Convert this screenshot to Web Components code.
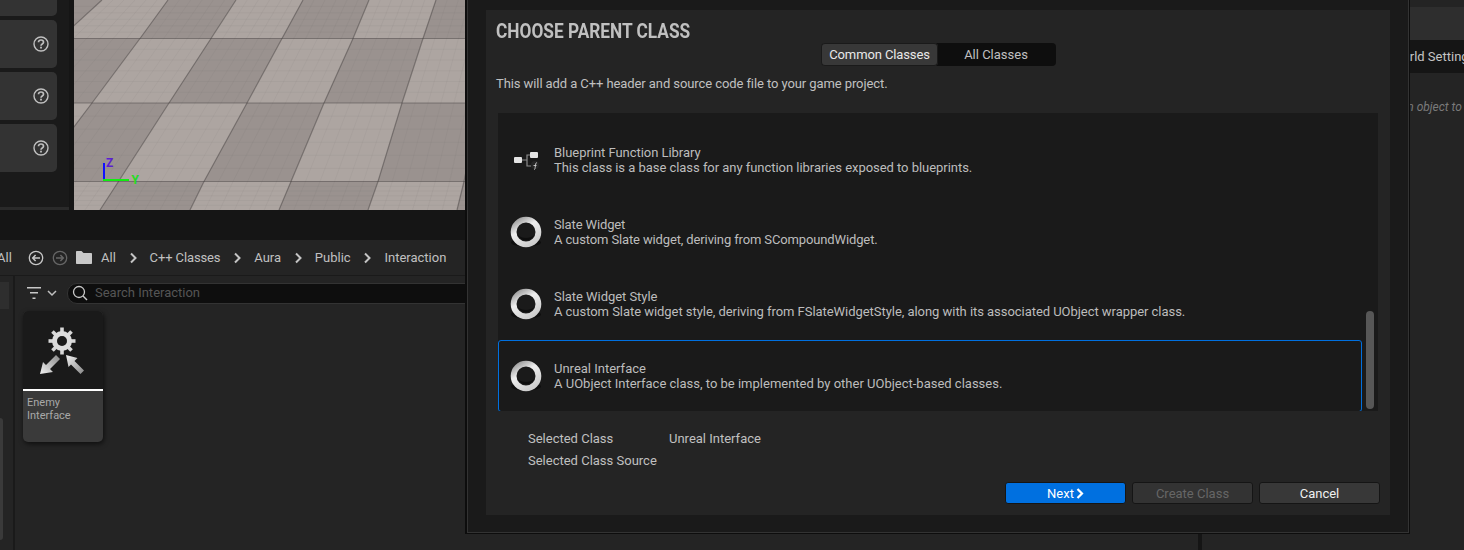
<!DOCTYPE html>
<html>
<head>
<meta charset="utf-8">
<title>Choose Parent Class</title>
<style>
  html,body{margin:0;padding:0;width:1464px;height:550px;overflow:hidden;background:#151515;}
  body{font-family:Roboto,"Liberation Sans",sans-serif;font-size:13px;color:#c0c0c0;}
</style>
</head>
<body>
<ue-editor>
  <ue-side-panel slot="side"></ue-side-panel>
  <ue-viewport slot="viewport"></ue-viewport>
  <ue-browser slot="browser"></ue-browser>
  <ue-details slot="details"></ue-details>
  <ue-dialog slot="dialog">
    <ue-class-row style="letter-spacing:-.04px" icon="function" name="Blueprint Function Library" desc="This class is a base class for any function libraries exposed to blueprints."></ue-class-row>
    <ue-class-row style="letter-spacing:-.13px" icon="ring" name="Slate Widget" desc="A custom Slate widget, deriving from SCompoundWidget."></ue-class-row>
    <ue-class-row style="letter-spacing:-.045px" icon="ring" name="Slate Widget Style" desc="A custom Slate widget style, deriving from FSlateWidgetStyle, along with its associated UObject wrapper class."></ue-class-row>
    <ue-class-row icon="ring" selected name="Unreal Interface" desc="A UObject Interface class, to be implemented by other UObject-based classes."></ue-class-row>
  </ue-dialog>
</ue-editor>

<script>
(function(customElements){
  'use strict';

  const ICON_HELP=`<svg width="16" height="16" viewBox="0 0 16 16" fill="none">
    <circle cx="8" cy="8" r="7" stroke="#c0c0c0" stroke-width="1.400"/>
    <path d="M5.500 6.300C5.500 4.900 6.600 4 8 4s2.500.9 2.500 2.200c0 1.800-2.500 1.700-2.500 3.500" stroke="#c0c0c0" stroke-width="1.700"/>
    <rect x="7.100" y="10.700" width="1.800" height="1.800" fill="#c0c0c0"/></svg>`;

  class UeEditor extends HTMLElement{
    constructor(){
      super();
      this.attachShadow({mode:'open'}).innerHTML=`<style>
        :host{display:grid;grid-template-columns:1198px 262px;column-gap:4px;width:1464px;height:550px;position:relative;background:#151515;overflow:hidden;}
        .left{display:grid;grid-template-rows:210px 310px;row-gap:30px;min-width:0;}
        .top{display:grid;grid-template-columns:69px 1fr;column-gap:5px;min-height:0;}
      </style>
      <div class="left">
        <div class="top"><slot name="side"></slot><slot name="viewport"></slot></div>
        <slot name="browser"></slot>
      </div>
      <slot name="details"></slot>
      <slot name="dialog"></slot>`;
    }
  }

  class UeSidePanel extends HTMLElement{
    constructor(){
      super();
      this.attachShadow({mode:'open'}).innerHTML=`<style>
        :host{display:flex;flex-direction:column;background:#1a1a1a;height:210px;overflow:hidden;box-sizing:border-box;border-bottom:3px solid #2a2a2a;}
        .btn{width:57px;height:48px;flex:none;background:#333;border-radius:0 5px 5px 0;margin-bottom:4px;display:flex;align-items:center;justify-content:flex-end;padding-right:8px;box-sizing:border-box;}
        .cut{margin-top:-32px;}
      </style>
      <div class="btn cut"></div>
      <div class="btn">${ICON_HELP}</div>
      <div class="btn">${ICON_HELP}</div>
      <div class="btn">${ICON_HELP}</div>`;
    }
  }

  class UeViewport extends HTMLElement{
    constructor(){
      super();
      this.attachShadow({mode:'open'}).innerHTML=`<style>
        :host{display:block;position:relative;height:210px;overflow:hidden;background:#a8a09c;}
        svg{display:block;}
        .gizmo{position:absolute;left:26px;top:155px;}
      </style>
      ${this.floor()}
      <svg class="gizmo" width="70" height="36" viewBox="0 0 70 36">
        <rect x="3" y="8" width="2" height="18" fill="#1010ff"/>
        <rect x="3" y="24" width="26" height="2" fill="#10ee10"/>
        <text x="6" y="12" font-family="Roboto" font-size="12" font-weight="700" fill="#5a20d0">Z</text>
        <text x="31.500" y="29" font-family="Roboto" font-size="12" font-weight="700" fill="#22dd22">Y</text>
      </svg>`;
    }

    floor(){
      // grid lines as measured on screen, x at each horizontal line, relative to the page
      const rowsY=[0,38.5,103,181.5,210];
      const cols=[
        [102,60,-10,-110,-150],
        [168,140,92,33,10],
        [236,211,169,118.5,100],
        [303,282,247,204,190],
        [369,353,324,291,279],
        [436,423,402,378,368],
        [503,494,480,464,457]
      ];
      const LIGHT='#ada5a1',DARK='#9a928f';
      let out='';
      const ox=74;
      for(let r=0;r<4;r++){
        for(let c=-1;c<7;c++){
          const x=(col,row)=>{
            if(col<0) return -400;
            if(col>6) return 800;
            return cols[col][row]-ox;
          };
          out+=`<polygon points="${x(c,r)},${rowsY[r]} ${x(c+1,r)},${rowsY[r]} ${x(c+1,r+1)},${rowsY[r+1]} ${x(c,r+1)},${rowsY[r+1]}" fill="${this.cell(r,c)?LIGHT:DARK}"/>`;
        }
      }
      // fine grid
      let fine='';
      for(let c=0;c<6;c++){
        for(let k=1;k<6;k++){
          const t=k/6;
          const pts=rowsY.map((y,r)=>`${(cols[c][r]*(1-t)+cols[c+1][r]*t-ox).toFixed(1)},${y}`).join(' ');
          fine+=`<polyline points="${pts}" fill="none"/>`;
        }
      }
      for(let r=0;r<4;r++){
        for(let k=1;k<6;k++){
          const y=rowsY[r]+(rowsY[r+1]-rowsY[r])*k/6;
          fine+=`<line x1="0" x2="400" y1="${y.toFixed(1)}" y2="${y.toFixed(1)}"/>`;
        }
      }
      let lines='';
      cols.forEach(col=>{
        lines+=`<polyline points="${col.map((v,r)=>`${v-ox},${rowsY[r]}`).join(' ')}" fill="none"/>`;
      });
      [38.5,103,181.5].forEach(y=>{ lines+=`<line x1="0" x2="400" y1="${y}" y2="${y}"/>`; });
      return `<svg width="391" height="210" viewBox="0 0 391 210">${out}
        <g stroke="#5a5050" stroke-opacity=".06" stroke-width="1">${fine}</g>
        <g stroke="#3f3a3a" stroke-opacity=".45" stroke-width="1.200" style="filter:blur(.5px)">${lines}</g></svg>`;
    }

    cell(r,c){
      // column c is the cell right of line c, -1 is left of line 0
      if(r===0) return c%2===0;
      if(r===1) return c%2!==0;
      if(r===2) return c===-1 || c%2===0;
      return c%2!==0;
    }
  }

  class UeCrumb extends HTMLElement{
    constructor(){
      super();
      this.attachShadow({mode:'open'}).innerHTML=`<style>
        :host{display:inline-flex;align-items:center;color:#c0c0c0;font-size:13px;white-space:nowrap;}
        svg{margin-left:12.800px;margin-right:12px;}
      </style>
      <slot></slot>
      <svg width="9" height="12" viewBox="0 0 9 12" fill="none"><path d="M2 1.500 6.500 6 2 10.500" stroke="#c4c4c4" stroke-width="2"/></svg>`;
    }
  }

  class UeBrowser extends HTMLElement{
    constructor(){
      super();
      this.attachShadow({mode:'open'}).innerHTML=`<style>
        :host{display:grid;grid-template-rows:36px 1fr;background:#242424;height:310px;overflow:hidden;}
        .crumbs{display:flex;align-items:center;padding-left:0;color:#c0c0c0;overflow:hidden;white-space:nowrap;border-bottom:1px solid #1a1a1a;height:36px;box-sizing:border-box;}
        .clip{margin-left:-3px;width:31px;flex:none;}
        .nav{display:flex;align-items:center;gap:8px;flex:none;margin-right:8px;}
        .tight{letter-spacing:-.12px;}
        .body{display:grid;grid-template-columns:13px 2px 1fr;min-height:0;}
        .tree{position:relative;background:#242424;}
        .tree i{display:block;width:9px;height:27px;margin-top:6px;background:#2e2e2e;}
        .tree b{position:absolute;left:0;top:142px;width:3px;height:122px;background:#3a3a3a;border-radius:0 3px 3px 0;}
        .rule{background:#1a1a1a;}
        .main{padding:0 0 0 8px;display:flex;flex-direction:column;min-width:0;}
        .filter{display:flex;align-items:center;height:35px;flex:none;padding-left:4px;}
        .filter svg.f{margin-right:6px;}
        .filter svg.c{margin-right:10px;}
        ue-search{flex:1;}
      </style>
      <div class="crumbs">
        <span class="clip">All</span>
        <div class="nav">
          <svg width="16" height="16" viewBox="0 0 16 16" fill="none"><circle cx="8" cy="8" r="6.700" stroke="#c8c8c8" stroke-width="1.300"/><path d="M12 8H5M7.600 5 4.700 8l2.900 3" stroke="#c8c8c8" stroke-width="1.500"/></svg>
          <svg width="16" height="16" viewBox="0 0 16 16" fill="none"><circle cx="8" cy="8" r="6.700" stroke="#666" stroke-width="1.300"/><path d="M4 8h7M8.400 5l2.900 3-2.900 3" stroke="#666" stroke-width="1.500"/></svg>
        </div>
        <svg style="flex:none;margin-right:9px" width="16" height="13" viewBox="0 0 16 13"><path d="M0 1C0 .4.400 0 1 0h4.500l2 2H15c.6 0 1 .4 1 1v9c0 .6-.4 1-1 1H1c-.6 0-1-.4-1-1z" fill="#c8c8c8"/></svg>
        <ue-crumb>All</ue-crumb>
        <ue-crumb class="tight">C++ Classes</ue-crumb>
        <ue-crumb>Aura</ue-crumb>
        <ue-crumb>Public</ue-crumb>
        <span>Interaction</span>
      </div>
      <div class="body">
        <div class="tree"><i></i><b></b></div>
        <div class="rule"></div>
        <div class="main">
          <div class="filter">
            <svg class="f" width="14" height="13" viewBox="0 0 14 13"><path d="M0 0h14v1.500H0zM3 5h8v1.500H3zM5.500 10.500h3V12h-3z" fill="#c8c8c8"/></svg>
            <svg class="c" width="10" height="7" viewBox="0 0 10 7" fill="none"><path d="M1 1l4 4 4-4" stroke="#c0c0c0" stroke-width="1.500"/></svg>
            <ue-search>Search Interaction</ue-search>
          </div>
          <ue-asset-tile>Enemy Interface</ue-asset-tile>
        </div>
      </div>`;
    }
  }

  class UeSearch extends HTMLElement{
    constructor(){
      super();
      this.attachShadow({mode:'open'}).innerHTML=`<style>
        :host{display:flex;align-items:center;height:21px;box-sizing:border-box;background:#0e0e0e;border:1px solid #333;border-radius:10px;color:#555;font-size:13px;padding:0 0 2px 4px;}
        svg{margin-right:7px;flex:none;}
      </style>
      <svg width="16" height="16" viewBox="0 0 16 16" fill="none"><circle cx="7" cy="7" r="5.500" stroke="#c8c8c8" stroke-width="1.300"/><path d="M11 11l4 4" stroke="#c8c8c8" stroke-width="1.500"/></svg>
      <slot></slot>`;
    }
  }

  class UeAssetTile extends HTMLElement{
    constructor(){
      super();
      this.attachShadow({mode:'open'}).innerHTML=`<style>
        :host{display:block;width:80px;height:131px;border-radius:5px;overflow:hidden;background:#3a3a3a;box-shadow:1px 2px 5px rgba(0,0,0,.6);}
        .thumb{height:78px;background:#1a1a1a;display:flex;justify-content:center;border-bottom:2px solid #fff;}
        .label{padding:5px 4px;font-size:11px;line-height:13px;color:#a8a8a8;width:56px;}
        svg{display:block;}
      </style>
      <div class="thumb">
        <svg width="80" height="78" viewBox="0 0 80 78">
          <defs>
            <linearGradient id="a1" x1="1" y1="0" x2="0" y2="1"><stop offset="0" stop-color="#888"/><stop offset="1" stop-color="#f2f2f2"/></linearGradient>
            <linearGradient id="a2" x1="0" y1="0" x2="1" y2="1"><stop offset="0" stop-color="#f2f2f2"/><stop offset="1" stop-color="#888"/></linearGradient>
          </defs>
          <g transform="translate(39 30)">
            <g fill="#d8d8d8">
              <rect x="-1.800" y="-13.500" width="3.600" height="27" />
              <rect x="-1.800" y="-13.500" width="3.600" height="27" transform="rotate(45)"/>
              <rect x="-1.800" y="-13.500" width="3.600" height="27" transform="rotate(90)"/>
              <rect x="-1.800" y="-13.500" width="3.600" height="27" transform="rotate(135)"/>
            </g>
            <circle r="7.500" fill="none" stroke="#dcdcdc" stroke-width="5"/>
            <circle r="5" fill="#1a1a1a"/>
          </g>
          <path d="M17 63 20 51 23 54 33 44 37 48 27 58 30 61z" fill="url(#a1)"/>
          <path d="M43 44 54.500 47 51.500 50 61 59.500 57.500 63 48 53.500 45.500 56z" fill="url(#a2)"/>
        </svg>
      </div>
      <div class="label"><slot></slot></div>`;
    }
  }

  class UeDetails extends HTMLElement{
    constructor(){
      super();
      this.attachShadow({mode:'open'}).innerHTML=`<style>
        :host{display:flex;flex-direction:column;background:#242424;height:550px;overflow:hidden;}
        .head{height:33px;margin-top:7px;background:#2e2e2e;flex:none;}
        .tab{height:33px;background:#151515;flex:none;display:flex;align-items:center;padding-left:189px;color:#c4c4c4;font-size:13px;white-space:nowrap;}
        .hint{padding:27px 0 0 164px;font-size:12px;font-style:italic;color:#7a7a7a;white-space:nowrap;}
      </style>
      <div class="head"></div>
      <div class="tab">World Settings</div>
      <div class="hint">Select an object to view details.</div>`;
    }
  }

  class UeButton extends HTMLElement{
    constructor(){
      super();
      this.attachShadow({mode:'open'}).innerHTML=`<style>
        :host{display:flex;align-items:center;justify-content:center;gap:2px;width:121px;height:22px;box-sizing:border-box;border:1px solid #151515;border-radius:3px;background:#383838;color:#f0f0f0;font-size:13px;}
        :host([primary]){background:#0070e0;color:#fff;}
        :host([disabled]){background:#333;color:#666;}
        svg{display:none;}
        :host([primary]) svg{display:block;}
      </style>
      <slot></slot>
      <svg width="8" height="11" viewBox="0 0 8 11" fill="none"><path d="M1.500 1 6 5.500 1.500 10" stroke="#fff" stroke-width="2.200"/></svg>`;
    }
  }

  class UeClassRow extends HTMLElement{
    constructor(){
      super();
      const ring=`<svg width="36" height="36" viewBox="0 0 36 36">
        <defs><linearGradient id="r" x1="0.100" y1="0" x2="0.700" y2="1"><stop offset="0" stop-color="#9c9c9c"/><stop offset=".4" stop-color="#eeeeee"/><stop offset="1" stop-color="#cecece"/></linearGradient></defs>
        <ellipse cx="18" cy="28.500" rx="15" ry="4" fill="#0e0e0e"/>
        <circle cx="18" cy="18" r="12.400" fill="#1a1a1a" stroke="url(#r)" stroke-width="5.800"/>
        <path d="M9.800 21a9 9 0 0 0 16.400 0a10 7 0 0 1-16.400 0z" fill="#0d0d0d"/>
      </svg>`;
      const fn=`<svg width="36" height="36" viewBox="0 0 36 36" fill="none">
        <path d="M14 18h5M22 13h-3v11h4" stroke="#8c8c8c" stroke-width="1.200"/>
        <rect x="6" y="15" width="8" height="6" rx="1" fill="#e4e4e4"/>
        <rect x="22" y="10" width="8" height="6" rx="1" fill="#e4e4e4"/>
        <circle cx="27" cy="23" r="4" fill="#262626"/>
        <path d="M26 27.500c1 0 1-.8 1.200-2l.5-3.500c.2-1 .6-1.300 1.300-1.300M25.500 23.500h3" stroke="#cfcfcf" stroke-width=".9"/>
      </svg>`;
      this.attachShadow({mode:'open'}).innerHTML=`<style>
        :host{display:flex;align-items:center;height:72px;box-sizing:border-box;flex:none;padding-left:9px;width:864px;border:1px solid transparent;border-radius:3px;color:#bdbdbd;font-size:13px;line-height:15px;}
        :host([selected]){border-color:#0070e0;}
        svg{flex:none;display:block;}
        .text{margin-left:10px;white-space:nowrap;}
        .text div{height:15px;}
      </style>
      ${this.getAttribute('icon')==='ring'?ring:fn}
      <div class="text"><div>${this.getAttribute('name')}</div><div>${this.getAttribute('desc')}</div></div>`;
    }
  }

  class UeDialog extends HTMLElement{
    constructor(){
      super();
      this.attachShadow({mode:'open'}).innerHTML=`<style>
        :host{position:absolute;left:465px;top:-30px;width:945px;height:564px;box-sizing:border-box;background:#1a1a1a;border:1px solid #0d0d0d;outline:1px solid #0d0d0d;outline-offset:-2px;padding:39px 19px 17px 20px;display:block;}
        .line{position:absolute;inset:1px 0 0 1px;border:1px solid #333;pointer-events:none;}
        .panel{background:#242424;height:505px;box-sizing:border-box;padding:0 10px;display:flex;flex-direction:column;position:relative;}
        h1{margin:0;height:41px;line-height:43px;font-size:21px;font-weight:700;color:#c0c0c0;white-space:nowrap;transform:scaleX(.822);transform-origin:0 50%;}
        .seg{display:flex;align-self:flex-start;margin:-8px 0 0 325px;width:235px;height:23px;background:#0e0e0e;border-radius:4px;font-size:13px;flex:none;}
        .seg span{display:flex;align-items:center;justify-content:center;}
        .seg .on{width:117px;background:#383838;border-radius:4px;color:#e8e8e8;box-shadow:inset 0 0 0 1px #1a1a1a;letter-spacing:-.12px;}
        .seg .off{flex:1;color:#c0c0c0;padding-right:2px;}
        .sub{margin-top:9px;height:17px;line-height:17px;font-size:13px;color:#c0c0c0;flex:none;letter-spacing:-.087px;}
        .list{margin:21px 2px 0;height:298px;background:#1a1a1a;position:relative;overflow:hidden;padding-top:11px;box-sizing:border-box;flex:none;display:flex;flex-direction:column;}
        .thumb{position:absolute;left:868px;top:198px;width:8px;height:98px;background:#575757;border-radius:4px;}
        .info{display:grid;grid-template-columns:141px 1fr;row-gap:6px;padding:20px 0 0 32px;line-height:16px;font-size:13px;color:#c0c0c0;flex:none;}
        .actions{display:flex;gap:6px;justify-content:flex-end;margin-top:auto;margin-bottom:11px;}
      </style>
      <div class="line"></div>
      <div class="panel">
        <h1>CHOOSE PARENT CLASS</h1>
        <div class="seg"><span class="on">Common Classes</span><span class="off">All Classes</span></div>
        <div class="sub">This will add a C++ header and source code file to your game project.</div>
        <div class="list"><slot></slot><div class="thumb"></div></div>
        <div class="info">
          <span>Selected Class</span><span>Unreal Interface</span>
          <span>Selected Class Source</span><span></span>
        </div>
        <div class="actions">
          <ue-button primary>Next</ue-button>
          <ue-button disabled>Create Class</ue-button>
          <ue-button>Cancel</ue-button>
        </div>
      </div>`;
    }
  }

  customElements.define('ue-editor',UeEditor);
  customElements.define('ue-side-panel',UeSidePanel);
  customElements.define('ue-viewport',UeViewport);
  customElements.define('ue-crumb',UeCrumb);
  customElements.define('ue-browser',UeBrowser);
  customElements.define('ue-search',UeSearch);
  customElements.define('ue-asset-tile',UeAssetTile);
  customElements.define('ue-details',UeDetails);
  customElements.define('ue-button',UeButton);
  customElements.define('ue-class-row',UeClassRow);
  customElements.define('ue-dialog',UeDialog);
})(window.customElements);
</script>
</body>
</html>
